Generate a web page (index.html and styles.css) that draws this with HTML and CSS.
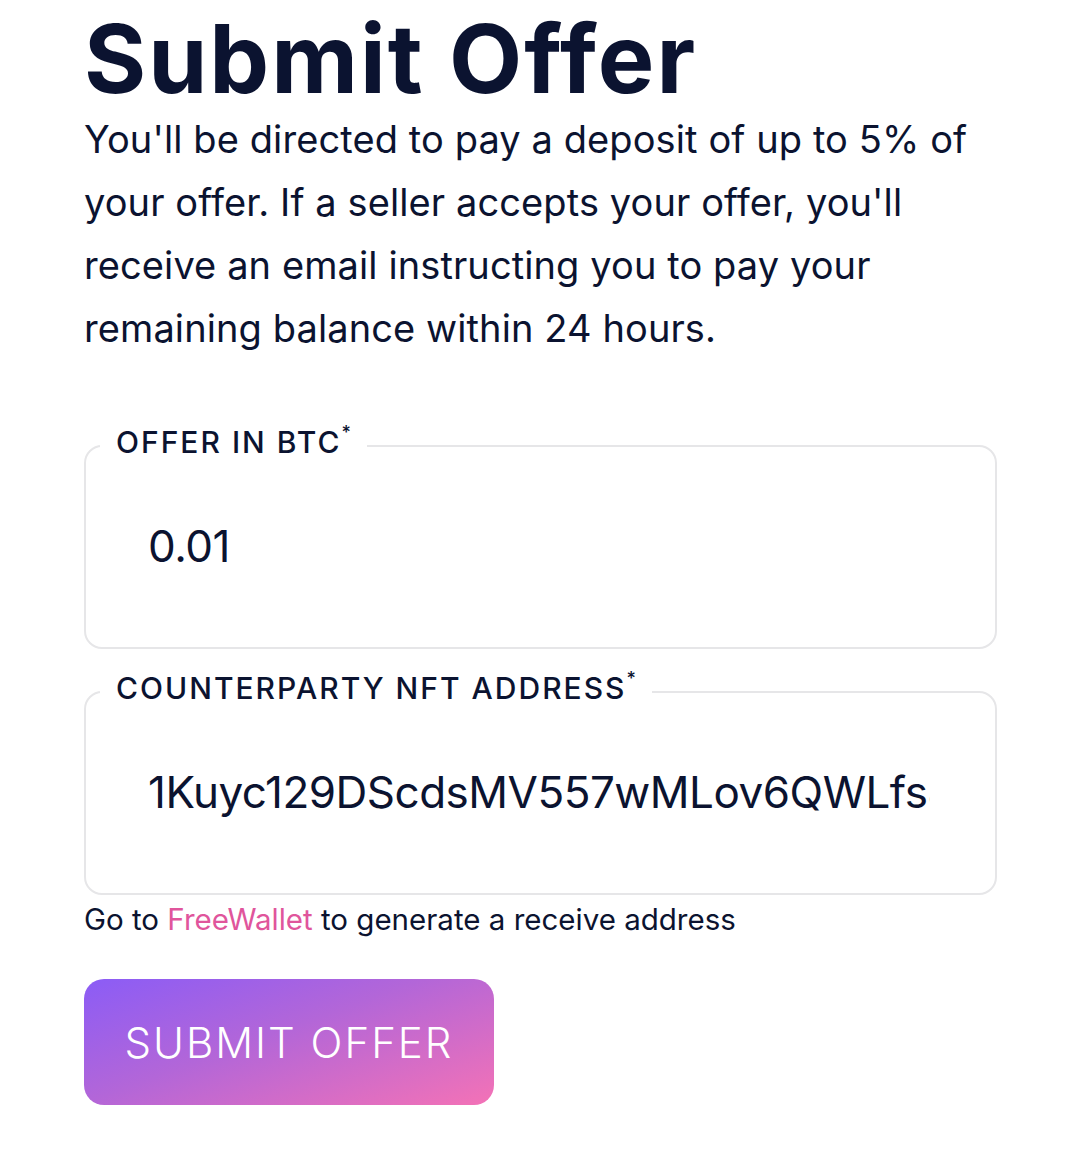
FILE: index.html
```html
<!DOCTYPE html>
<html lang="en">
<head>
    <meta charset="UTF-8">
    <meta name="viewport" content="width=device-width, initial-scale=1.0">
    <title>Submit Offer</title>
    <link rel="stylesheet" href="styles.css">
</head>
<body>
    <div class="offer">
        <h1>Submit Offer</h1>
        <p class="intro">You'll be directed to pay a deposit of up to 5% of your offer. If a seller accepts your offer, you'll receive an email instructing you to pay your remaining balance within 24 hours.</p>

        <fieldset class="field">
            <legend>Offer in BTC<sup>*</sup></legend>
            <input type="text" value="0.01">
        </fieldset>

        <fieldset class="field field-address">
            <legend>Counterparty NFT Address<sup>*</sup></legend>
            <input type="text" value="1Kuyc129DScdsMV557wMLov6QWLfs8ZhQ4">
        </fieldset>
        <p class="hint">Go to <a href="#">FreeWallet</a> to generate a receive address</p>

        <button class="submit">Submit Offer</button>
    </div>
</body>
</html>
```

FILE: styles.css
```css
body {
    margin: 0;
    background-color: #ffffff;
    font-family: 'Inter', 'Noto Sans', sans-serif;
    color: #0b1330;
}

.offer {
    width: 913px;
    padding: 0 0 0 84px;
}

h1 {
    margin: 0;
    padding: 0;
    font-size: 95px;
    font-weight: 700;
    line-height: 117px;
    letter-spacing: 2px;
}

.intro {
    margin: -9px 0 0;
    font-size: 38px;
    line-height: 63px;
    letter-spacing: 0.1px;
}

.field {
    margin: 64px 0 0;
    padding: 0 0 0 62px;
    border: 2px solid #e6e6e8;
    border-radius: 18px;
    height: 225px;
    box-sizing: border-box;
}

.field-address {
    margin-top: 21px;
}

legend {
    margin-left: -48px;
    padding: 0 14px 8px 16px;
    font-size: 30px;
    font-weight: 500;
    letter-spacing: 2px;
    text-transform: uppercase;
}

legend sup {
    font-size: 18px;
    vertical-align: 14px;
    line-height: 0;
}

.field input {
    display: block;
    width: 782px;
    margin-top: 51px;
    padding: 0;
    border: none;
    outline: none;
    font-family: inherit;
    font-size: 44px;
    color: #0b1330;
    letter-spacing: -0.5px;
    background: transparent;
}

.hint {
    margin: 6px 0 0;
    font-size: 29.5px;
    line-height: 36px;
}

.hint a {
    color: #e0559c;
    text-decoration: none;
}

.submit {
    display: block;
    margin-top: 42px;
    width: 410px;
    height: 126px;
    border: none;
    border-radius: 20px;
    background: linear-gradient(160deg, #8b5cf6 0%, #b366d8 45%, #f472b6 100%);
    color: #ffffff;
    font-family: inherit;
    font-size: 42px;
    font-weight: 300;
    letter-spacing: 2px;
    text-transform: uppercase;
}
```
